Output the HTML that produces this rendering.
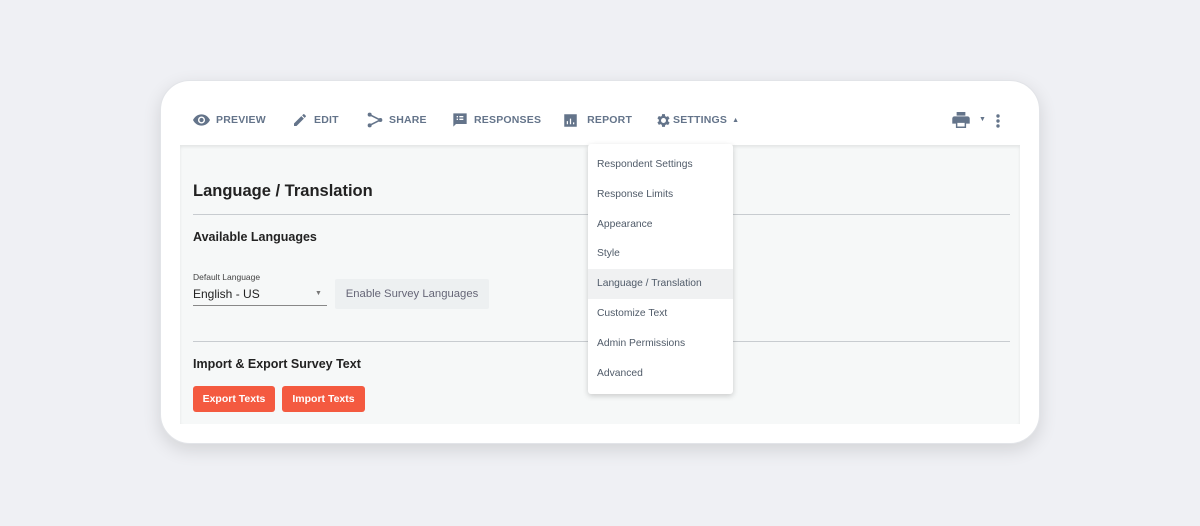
<!DOCTYPE html>
<html><head><style>
*{margin:0;padding:0;box-sizing:border-box}
body{width:1200px;height:526px;background:#eff0f4;font-family:"Liberation Sans",sans-serif;position:relative;overflow:hidden}
.card{position:absolute;left:160px;top:80px;width:880px;height:364px;background:#fff;border-radius:30px;box-shadow:0 6px 18px rgba(0,0,0,.12);border:1px solid #e2e4e8}
.nav{position:absolute;top:111px;height:18px;font-size:10.5px;font-weight:bold;color:#64748a;letter-spacing:.2px;display:flex;align-items:center;gap:6px}
.nav svg{fill:#64748a;display:block}
.content{position:absolute;left:180px;top:145px;width:840px;height:279px;background:#f6f8f8;box-shadow:inset 0 2px 3px rgba(0,0,0,.08)}
.abs{position:absolute}
.h1{left:193px;top:182px;font-size:16.5px;font-weight:bold;color:#222}
.h2{font-size:12.5px;font-weight:bold;color:#222}
.line{height:1px;background:#c8ccd0;left:193px;width:817px}
.btn{background:#f45a40;color:#fff;font-size:10.5px;font-weight:bold;border-radius:3px;top:386px;height:26px;line-height:26px;text-align:center}
.dd{left:588px;top:144px;width:145px;height:250px;background:#fff;border-radius:3px;box-shadow:0 2px 6px rgba(0,0,0,.18)}
.dd div{height:29.8px;line-height:29.8px;padding-left:9px;font-size:10.3px;color:#4f5a68}
.dd .hl{background:#f0f1f2}
</style></head><body>
<div class="card"></div>
<div class="nav" style="left:193px"><svg width="17" height="12" viewBox="0 0 24 16"><path d="M12 0C6 0 2 4 0 8c2 4 6 8 12 8s10-4 12-8C22 4 18 0 12 0zm0 13a5 5 0 110-10 5 5 0 010 10zm0-8a3 3 0 100 6 3 3 0 000-6z"/></svg>PREVIEW</div>
<div class="nav" style="left:292px"><svg width="16" height="16" viewBox="0 0 24 24"><path d="M3 17.2V21h3.8L17.8 10 14 6.2 3 17.2zM20.7 7a1 1 0 000-1.4l-2.3-2.3a1 1 0 00-1.4 0l-1.8 1.8 3.7 3.7L20.7 7z"/></svg>EDIT</div>
<div class="nav" style="left:367px"><svg width="16" height="16" viewBox="0 0 24 22"><circle cx="4" cy="3" r="3"/><circle cx="20" cy="11" r="3"/><circle cx="4" cy="19" r="3"/><path d="M4 3l16 8-16 8" stroke="#64748a" stroke-width="2.4" fill="none"/></svg>SHARE</div>
<div class="nav" style="left:452px"><svg width="16" height="16" viewBox="0 0 24 24"><path d="M2 2h20v16H6l-4 4V2zm5 4v2h2V6H7zm4 0v2h6V6h-6zm-4 4v2h2v-2H7zm4 0v2h6v-2h-6z"/></svg>RESPONSES</div>
<div class="nav" style="left:563px"><svg width="15" height="15" viewBox="0 0 24 24"><path d="M2 2h20v20H2zM6 13v5h2v-5zm5-4v9h2V9zm5 6v3h2v-3z"/></svg>&nbsp;REPORT</div>
<div class="nav" style="left:655px;gap:1px"><svg width="17" height="17" viewBox="0 0 24 24"><path d="M19.4 13a7.5 7.5 0 000-2l2.1-1.7-2-3.4-2.5 1a7.6 7.6 0 00-1.7-1L15 3h-4l-.4 2.6a7.6 7.6 0 00-1.7 1l-2.5-1-2 3.4L6.5 11a7.5 7.5 0 000 2l-2.1 1.7 2 3.4 2.5-1c.5.4 1.1.7 1.7 1L11 21h4l.4-2.6c.6-.3 1.2-.6 1.7-1l2.5 1 2-3.4L19.4 13zM13 15.5a3.5 3.5 0 110-7 3.5 3.5 0 010 7z" transform="translate(-1 0)"/></svg>SETTINGS<span style="font-size:7px;margin-left:4px">▲</span></div>
<svg class="abs" style="left:952px;top:112px" width="18" height="16" viewBox="0 0 24 22" fill="#64748a"><path d="M6 0h12v5H6zM3 6h18a3 3 0 013 3v7h-5v6H5v-6H0V9a3 3 0 013-3zm4 9v5h10v-5z"/></svg>
<span class="abs" style="left:979px;top:116px;font-size:7px;color:#64748a">▼</span>
<svg class="abs" style="left:995px;top:113px" width="6" height="16" fill="#64748a"><circle cx="3" cy="3" r="1.7"/><circle cx="3" cy="8" r="1.7"/><circle cx="3" cy="13" r="1.7"/></svg>
<div class="content"></div>
<div class="abs h1">Language / Translation</div>
<div class="abs line" style="top:214px"></div>
<div class="abs h2" style="left:193px;top:230px">Available Languages</div>
<div class="abs" style="left:193px;top:272px;font-size:8.5px;color:#444">Default Language</div>
<div class="abs" style="left:193px;top:287px;font-size:12px;color:#222">English - US</div>
<span class="abs" style="left:315px;top:290px;font-size:7px;color:#777">▼</span>
<div class="abs" style="left:193px;top:305px;width:134px;height:1px;background:#888"></div>
<div class="abs" style="left:335px;top:279px;width:154px;height:30px;background:#edf0f1;border-radius:2px;font-size:11.3px;color:#667;line-height:31px;text-align:center">Enable Survey Languages</div>
<div class="abs line" style="top:341px"></div>
<div class="abs h2" style="left:193px;top:357px">Import &amp; Export Survey Text</div>
<div class="abs btn" style="left:193px;width:82px">Export Texts</div>
<div class="abs btn" style="left:282px;width:83px">Import Texts</div>
<div class="abs dd" style="padding-top:6px">
<div>Respondent Settings</div><div>Response Limits</div><div>Appearance</div><div>Style</div><div class="hl">Language / Translation</div><div>Customize Text</div><div>Admin Permissions</div><div>Advanced</div>
</div>
</body></html>
